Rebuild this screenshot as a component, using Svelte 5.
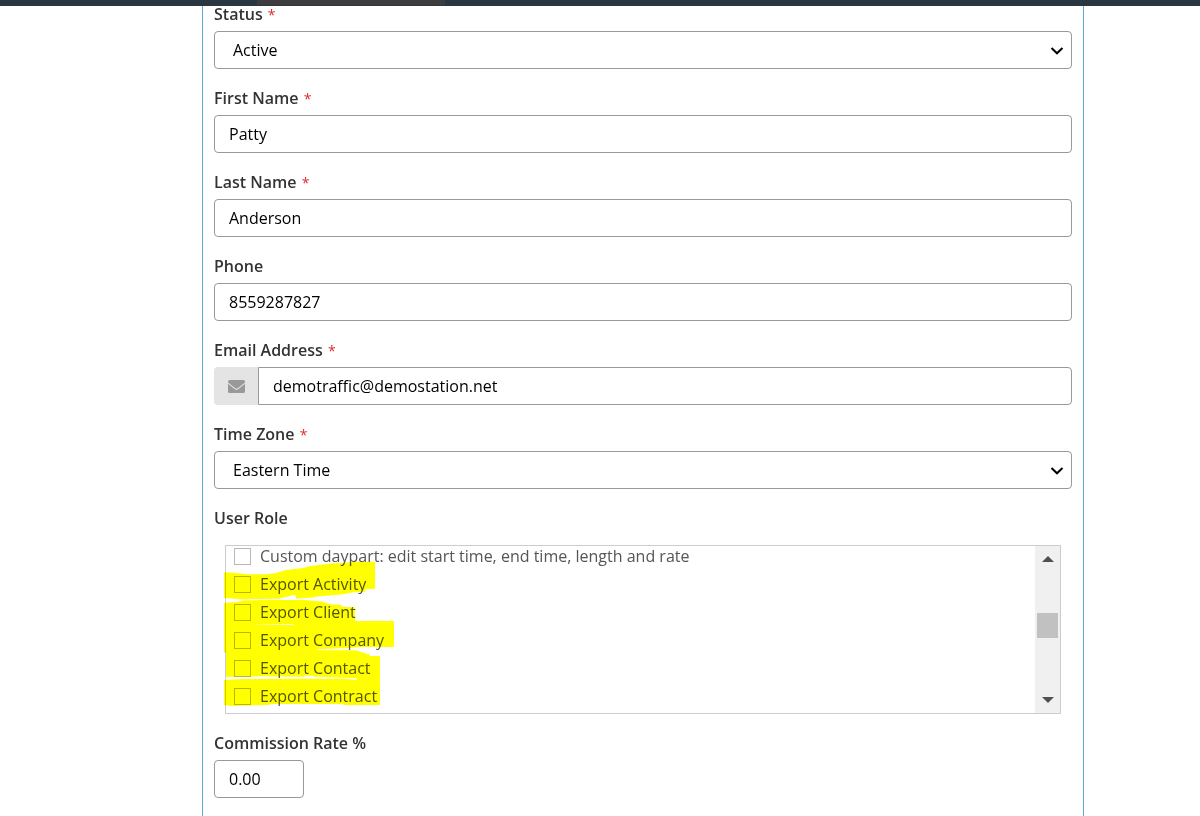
<script lang="ts">
	let status = $state('Active')
	let firstName = $state('Patty')
	let lastName = $state('Anderson')
	let phone = $state('8559287827')
	let email = $state('demotraffic@demostation.net')
	let timeZone = $state('Eastern Time')
	let commission = $state('0.00')

	let roles = $state([
		{ label: 'Custom daypart: edit start time, end time, length and rate', checked: false },
		{ label: 'Export Activity', checked: false },
		{ label: 'Export Client', checked: false },
		{ label: 'Export Company', checked: false },
		{ label: 'Export Contact', checked: false },
		{ label: 'Export Contract', checked: false }
	])
</script>

{#snippet chevron()}
	<svg class="chevron" width="14" height="10" viewBox="0 0 14 10" fill="none" aria-hidden="true">
		<path d="M1.5 2L7 7.3L12.5 2" stroke="#000" stroke-width="2" />
	</svg>
{/snippet}

<header class="topbar"><div class="topbar-active"></div></header>

<form class="panel">
	<div class="field">
		<label for="status">Status <span class="required">*</span></label>
		<div class="select-wrapper">
			<select id="status" class="control" bind:value={status}>
				<option>Active</option>
				<option>Inactive</option>
			</select>
			{@render chevron()}
		</div>
	</div>

	<div class="field">
		<label for="first-name">First Name <span class="required">*</span></label>
		<input id="first-name" class="control" type="text" bind:value={firstName} />
	</div>

	<div class="field">
		<label for="last-name">Last Name <span class="required">*</span></label>
		<input id="last-name" class="control" type="text" bind:value={lastName} />
	</div>

	<div class="field">
		<label for="phone">Phone</label>
		<input id="phone" class="control" type="text" bind:value={phone} />
	</div>

	<div class="field">
		<label for="email">Email Address <span class="required">*</span></label>
		<div class="input-group">
			<span class="addon">
				<svg width="17" height="13" viewBox="0 0 17 13" aria-hidden="true">
					<path
						d="M1.500 0h14A1.500 1.500 0 0 1 17 1.500v1.100L9.700 8.300q-1.200.8-2.400 0L0 2.600v-1.100A1.500 1.500 0 0 1 1.500 0z"
						fill="#999"
					/>
					<path
						d="M0 3.800l6.900 5.400q1.600 1 3.200 0L17 3.800v7.700a1.500 1.500 0 0 1-1.500 1.500h-14A1.500 1.500 0 0 1 0 11.500z"
						fill="#999"
					/>
				</svg>
			</span>
			<input id="email" class="control" type="email" bind:value={email} />
		</div>
	</div>

	<div class="field">
		<label for="time-zone">Time Zone <span class="required">*</span></label>
		<div class="select-wrapper">
			<select id="time-zone" class="control" bind:value={timeZone}>
				<option>Eastern Time</option>
				<option>Central Time</option>
			</select>
			{@render chevron()}
		</div>
	</div>

	<div class="field" role="group" aria-labelledby="role-label">
		<span id="role-label" class="label">User Role</span>
		<div class="role-box">
			<div class="role-view">
				<ul class="role-list">
					{#each roles as role}
						<li>
							<label class="role">
								<input type="checkbox" bind:checked={role.checked} />
								{role.label}
							</label>
						</li>
					{/each}
				</ul>
			</div>
			<div class="scrollbar">
				<button type="button" aria-label="Scroll up">
					<svg width="12" height="6" viewBox="0 0 12 6"><path d="M0 6L6 0L12 6z" fill="#505050" /></svg>
				</button>
				<div class="track"><div class="thumb"></div></div>
				<button type="button" aria-label="Scroll down">
					<svg width="12" height="6" viewBox="0 0 12 6"><path d="M0 0L6 6L12 0z" fill="#505050" /></svg>
				</button>
			</div>
			<!-- highlighter strokes -->
			<svg class="marker" width="200" height="169" viewBox="45 30 600 507" aria-hidden="true">
				<g fill="#ff0">
					<path
						d="M42 112L80 114L110 118H174L200 113L228 105L280 99L300 93L370 85L400 84L432 80H495V161L466 162V170L430 172L400 178L330 184L300 188L258 191V181H248L206 191L150 192L98 193L42 189z"
					/>
					<path
						d="M42 204L80 201L104 196L160 195H286L340 200L358 208L395 210V215L435 217V258H552V336H462L400 340L322 343L325 346H437L480 359V363H510V440H441V430L400 428L330 425H310V422H282V425L150 424L48 426V354L42 352zM135 270H250V267L196 268L135 269z"
						fill-rule="evenodd"
					/>
					<path d="M42 435L98 432L250 431H400L510 440V510H400V507H184L174 510L60 513L54 511H42z" />
				</g>
			</svg>
		</div>
	</div>

	<div class="field">
		<label for="commission">Commission Rate %</label>
		<input id="commission" class="control short" type="text" bind:value={commission} />
	</div>
</form>

<style>
	:global(body) {
		margin: 0;
		background: #fff;
		font-family: 'Open Sans', sans-serif;
		font-size: 16px;
		color: #333;
	}

	.topbar {
		position: fixed;
		top: 0;
		left: 0;
		right: 0;
		height: 6px;
		background: #2a3642;
		z-index: 2;
	}

	.topbar-active {
		width: 188px;
		height: 5px;
		margin-left: 257px;
		background: #3e3c3c;
	}

	.panel {
		box-sizing: border-box;
		display: flex;
		flex-direction: column;
		gap: 18px;
		margin: 0 116px 0 202px;
		padding: 3px 11px 18px;
		border: solid #5fa8d3;
		border-width: 0 1px;
	}

	.field {
		display: flex;
		flex-direction: column;
		gap: 6px;
	}

	.field > label,
	.label {
		font-weight: 600;
		line-height: 22px;
	}

	.required {
		margin-left: 1px;
		font-size: 14px;
		font-weight: 400;
		line-height: 1;
		color: #e02b2b;
	}

	.control {
		box-sizing: border-box;
		width: 100%;
		height: 38px;
		margin: 0;
		padding: 0 14px;
		border: 1px solid #999;
		border-radius: 4px;
		background: #fff;
		color: #000;
		font: inherit;
	}

	.short {
		width: 90px;
	}

	.select-wrapper {
		position: relative;
	}

	select.control {
		display: block;
		padding: 0 18px;
		appearance: none;
	}

	.chevron {
		position: absolute;
		top: 15px;
		right: 8px;
		pointer-events: none;
	}

	.input-group {
		display: flex;
	}

	.input-group .control {
		flex: 1;
		border-radius: 0 4px 4px 0;
	}

	.addon {
		display: flex;
		align-items: center;
		justify-content: center;
		width: 44px;
		border-radius: 4px 0 0 4px;
		background: #e4e4e4;
	}

	.role-box {
		position: relative;
		display: flex;
		margin: 10px 11px 0;
		border: 1px solid #ccc;
	}

	.role-view {
		flex: 1;
		height: 167px;
		overflow: hidden;
	}

	.role-list {
		margin: -4px 0 0;
		padding: 0 0 0 8px;
		list-style: none;
	}

	.role {
		display: flex;
		align-items: center;
		gap: 9px;
		height: 28px;
		color: #555;
	}

	.role input {
		appearance: none;
		box-sizing: border-box;
		width: 17px;
		height: 17px;
		margin: 0;
		border: 1px solid #b8b8b8;
		background: #fff;
	}

	.role input:checked {
		background: #5fa8d3;
	}

	.scrollbar {
		display: flex;
		flex-direction: column;
		width: 25px;
		background: #f0f0f0;
	}

	.scrollbar button {
		display: flex;
		align-items: center;
		justify-content: center;
		height: 26px;
		padding: 0;
		border: 0;
		background: none;
	}

	.track {
		flex: 1;
		padding: 41px 2px 0;
	}

	.thumb {
		height: 25px;
		background: #c1c1c1;
	}

	.marker {
		position: absolute;
		top: -1px;
		left: -1px;
		overflow: visible;
		mix-blend-mode: multiply;
		pointer-events: none;
	}
</style>
